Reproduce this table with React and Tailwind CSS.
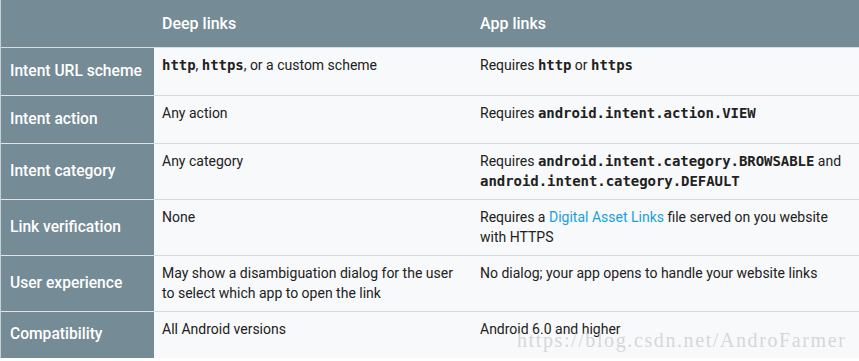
import React from 'react';

// Deep links vs App links comparison table
const code = 'font-["DejaVu_Sans_Mono",monospace] font-bold text-[14px] tracking-[-0.05px]';

function Code({ children }) {
  return <span className={code}>{children}</span>;
}

const rows = [
  {
    label: 'Intent URL scheme',
    deep: (
      <>
        <Code>http</Code>, <Code>https</Code>, or a custom scheme
      </>
    ),
    app: (
      <>
        Requires <Code>http</Code> or <Code>https</Code>
      </>
    ),
  },
  {
    label: 'Intent action',
    deep: 'Any action',
    app: (
      <>
        Requires <Code>android.intent.action.VIEW</Code>
      </>
    ),
  },
  {
    label: 'Intent category',
    deep: 'Any category',
    app: (
      <>
        Requires <Code>android.intent.category.BROWSABLE</Code> and{' '}
        <Code>android.intent.category.DEFAULT</Code>
      </>
    ),
  },
  {
    label: 'Link verification',
    deep: 'None',
    app: (
      <>
        Requires a <span className="text-[#1a9fe0]">Digital Asset Links</span> file served on you website
        with HTTPS
      </>
    ),
  },
  {
    label: 'User experience',
    deep: 'May show a disambiguation dialog for the user to select which app to open the link',
    app: 'No dialog; your app opens to handle your website links',
  },
  {
    label: 'Compatibility',
    deep: 'All Android versions',
    app: 'Android 6.0 and higher',
  },
];

export default function App() {
  return (
    <div className="relative w-[859px] h-[361px] bg-white overflow-hidden font-['Roboto',sans-serif]">
      <div className="flex flex-col border-l border-[#c5d0d5]">
        {/* header */}
        <div className="flex h-[48px] bg-[#758b96] border-b border-[#d6dde0] text-white text-[16px] font-medium">
          <div className="w-[153px] shrink-0" />
          <div className="w-[318px] shrink-0 px-2 flex items-center">Deep links</div>
          <div className="flex-1 px-2 flex items-center">App links</div>
        </div>

        {rows.map((r, i) => {
          const last = i === rows.length - 1;
          return (
            <div
              key={r.label}
              className={
                last
                  ? 'flex h-[46px]'
                  : 'flex min-h-[48px] border-b border-[#d5d9dc]'
              }
            >
              <div
                className={
                  'w-[153px] shrink-0 bg-[#758b96] text-white text-[15.6px] font-medium whitespace-nowrap flex items-center px-[9px]' +
                  (last ? '' : ' -mb-px border-b border-[#dde3e6]')
                }
              >
                {r.label}
              </div>
              <div className="w-[318px] shrink-0 bg-[#f8f9fa] px-2 pt-[7px] pb-[8px] text-[14px] leading-[20px] text-[#212121]">
                {r.deep}
              </div>
              <div className="flex-1 bg-[#f8f9fa] pl-2 pr-1 pt-[7px] pb-[8px] text-[14px] leading-[20px] text-[#212121]">
                {r.app}
              </div>
            </div>
          );
        })}
      </div>

      {/* watermark */}
      <div className="absolute left-[517px] top-[329px] font-['Liberation_Serif',serif] text-[20px] tracking-[1.6px] leading-[22px] text-[#c8ccd0]/75 whitespace-nowrap">
        https://blog.csdn.net/AndroFarmer
      </div>
    </div>
  );
}
